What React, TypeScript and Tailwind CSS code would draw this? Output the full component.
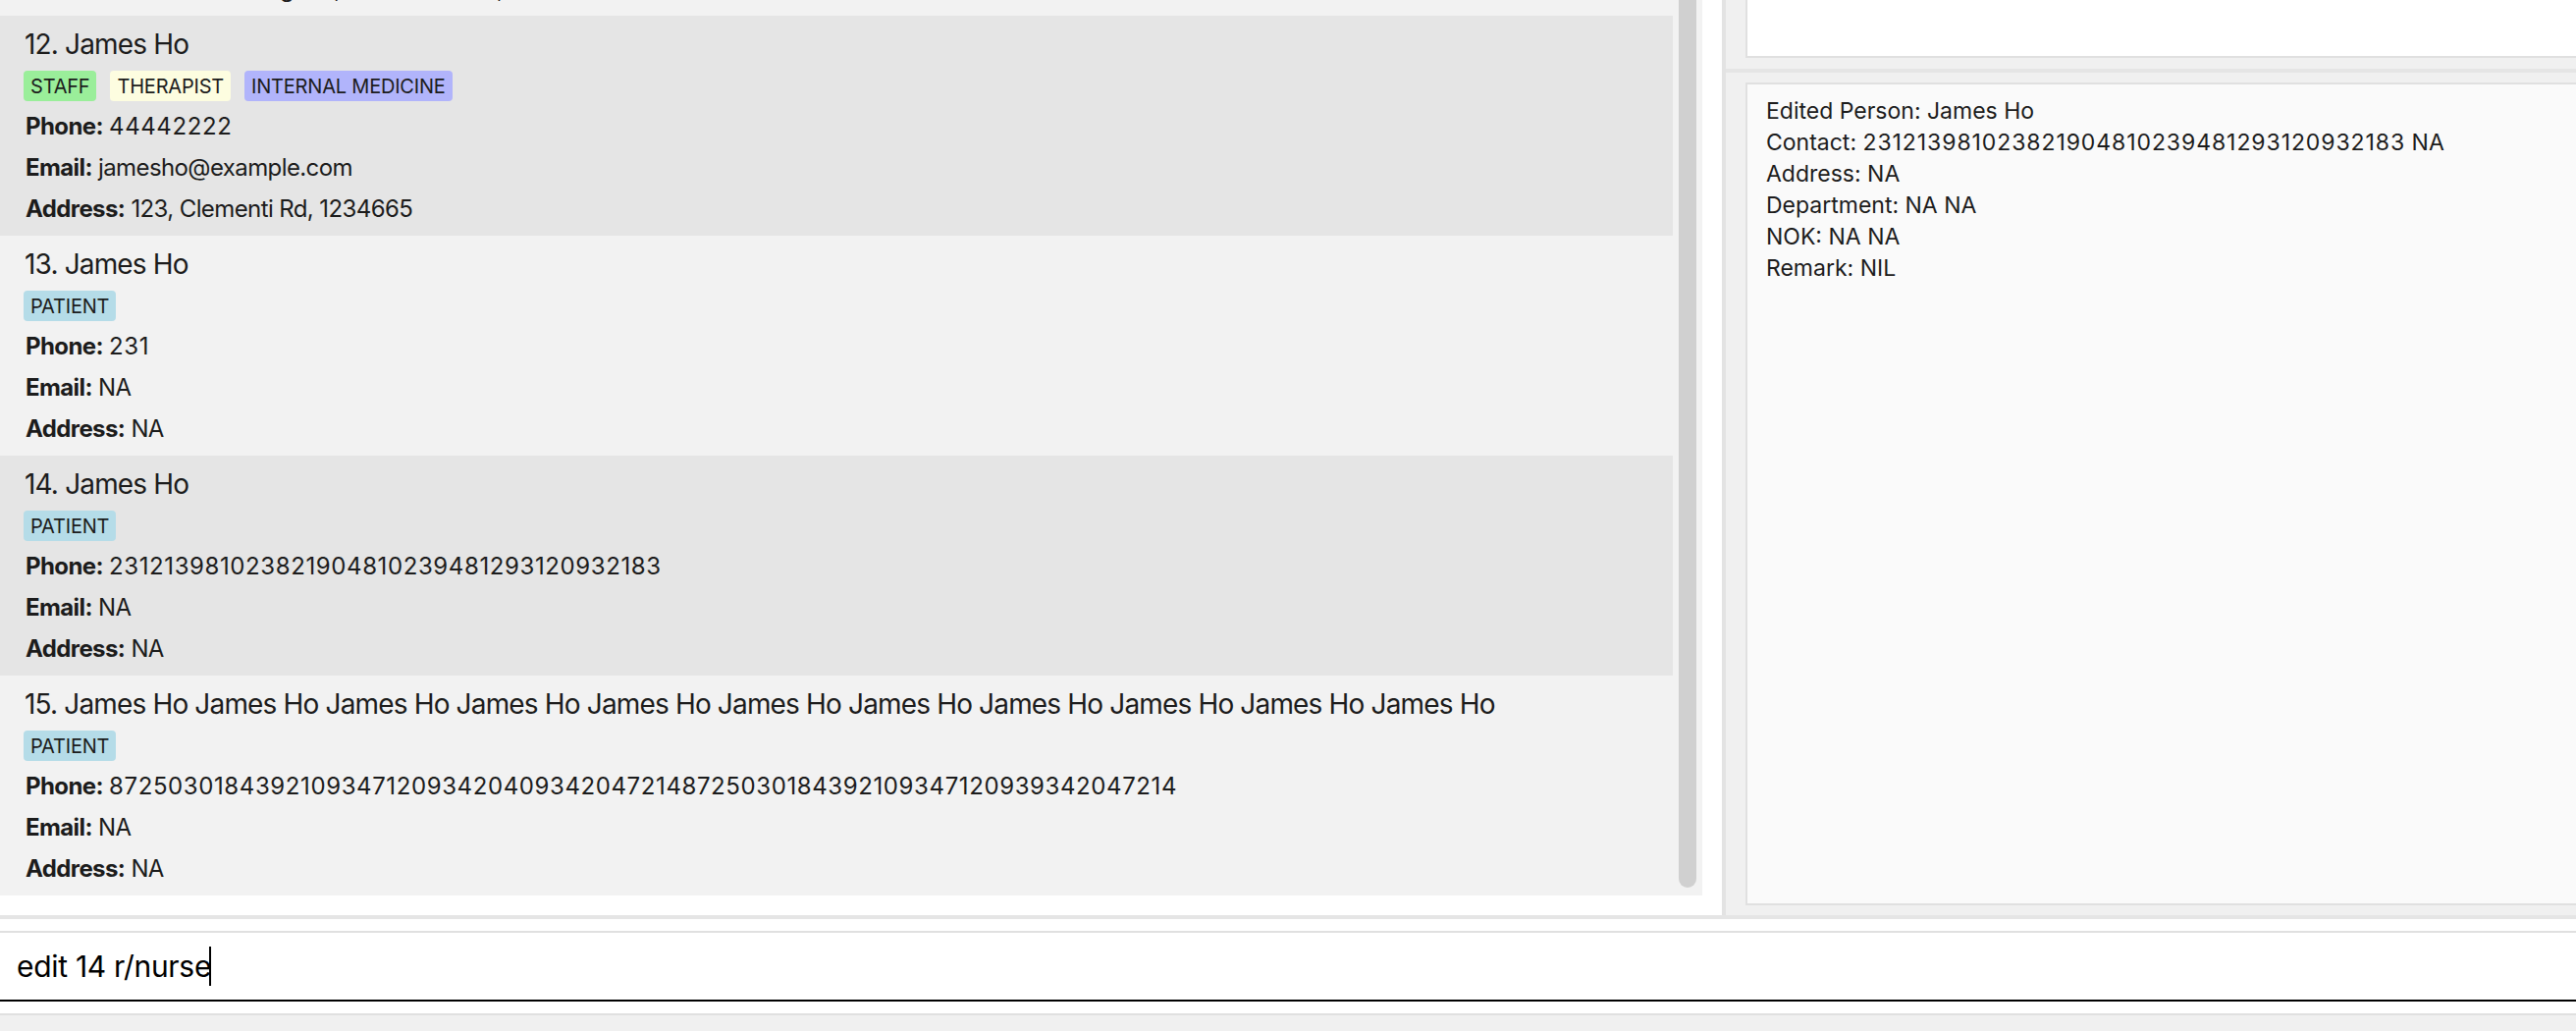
import React from "react";

type Tag = { label: string; cls: string };

type Person = {
  index: number;
  name: string;
  tags: Tag[];
  phone: string;
  email: string;
  address: string;
};

const STAFF: Tag = { label: "STAFF", cls: "bg-[#9aee9a]" };
const THERAPIST: Tag = { label: "THERAPIST", cls: "bg-[#fdfde0]" };
const INTERNAL: Tag = { label: "INTERNAL MEDICINE", cls: "bg-[#b1b4fb]" };
const PATIENT: Tag = { label: "PATIENT", cls: "bg-[#b5dce8]" };

const PEOPLE: Person[] = [
  {
    index: 11,
    name: "David Li",
    tags: [PATIENT],
    phone: "91031282",
    email: "lidavid@example.com",
    address: "Blk 436 Serangoon, Gardens St 26, #16-43",
  },
  {
    index: 12,
    name: "James Ho",
    tags: [STAFF, THERAPIST, INTERNAL],
    phone: "44442222",
    email: "jamesho@example.com",
    address: "123, Clementi Rd, 1234665",
  },
  {
    index: 13,
    name: "James Ho",
    tags: [PATIENT],
    phone: "231",
    email: "NA",
    address: "NA",
  },
  {
    index: 14,
    name: "James Ho",
    tags: [PATIENT],
    phone: "231213981023821904810239481293120932183",
    email: "NA",
    address: "NA",
  },
  {
    index: 15,
    name: Array(11).fill("James Ho").join(" "),
    tags: [PATIENT],
    phone: "8725030184392109347120934204093420472148725030184392109347120939342047214",
    email: "NA",
    address: "NA",
  },
];

function PersonCard({ person }: { person: Person }) {
  const even = person.index % 2 === 0;
  return (
    <div
      className={`h-[224px] pl-[24px] pt-[12px] ${
        even ? "bg-[#e5e5e5]" : "bg-[#f2f2f2]"
      }`}
    >
      <div className="pl-[1px] text-[28px] leading-[34px] tracking-[-0.03em]">
        {person.index}. {person.name}
      </div>
      <div className="mt-[10px] flex gap-[14px]">
        {person.tags.map((tag) => (
          <span
            key={tag.label}
            className={`flex h-[31px] items-center rounded-[4px] px-[7px] text-[20px] tracking-[-0.01em] ${tag.cls}`}
          >
            {tag.label}
          </span>
        ))}
      </div>
      <div className="mt-[5px] pl-[2px] text-[24px] leading-[42px] tracking-[-0.025em]">
        <div>
          <span className="font-bold">Phone:</span>{" "}
          <span className="tracking-[0.025em]">{person.phone}</span>
        </div>
        <div>
          <span className="font-bold">Email:</span> {person.email}
        </div>
        <div>
          <span className="font-bold">Address:</span> {person.address}
        </div>
      </div>
    </div>
  );
}

export default function App() {
  return (
    <div className="flex h-[1050px] w-[2624px] flex-col overflow-hidden bg-[#f0f0f0] font-['Inter',sans-serif] text-[#1c1c1c]">
      {/* 上半部分：列表 + 结果 */}
      <div className="flex h-[932px]">
        <div className="w-[1754px] bg-white">
          <div className="flex h-[912px] w-[1734px] overflow-hidden bg-[#f2f2f2]">
            <div className="w-[1704px] overflow-hidden">
              <div className="mt-[-208px]">
                {PEOPLE.map((p) => (
                  <PersonCard key={p.index} person={p} />
                ))}
              </div>
            </div>
            <div className="w-[30px] px-[6px]">
              <div className="h-[904px] rounded-b-[10px] bg-[#d0d0d0]" />
            </div>
          </div>
        </div>
        <div className="w-[4px] bg-[#e3e3e3]" />
        <div className="flex flex-1 flex-col bg-[#f0f0f0]">
          <div className="ml-[20px] h-[59px] border-b-2 border-l-2 border-[#e0e0e0] bg-white" />
          <div className="mt-[11px] h-[4px] bg-[#e5e5e5]" />
          <div className="ml-[20px] mt-[10px] h-[838px] border-y-2 border-l-2 border-[#e0e0e0] bg-[#fafafa] pl-[19px] pt-[11px] text-[23px] leading-[32px]">
            <div>Edited Person: James Ho</div>
            <div>
              Contact:{" "}
              <span className="tracking-[0.04em]">
                231213981023821904810239481293120932183
              </span>{" "}
              NA
            </div>
            <div>Address: NA</div>
            <div>Department: NA NA</div>
            <div>NOK: NA NA</div>
            <div>Remark: NIL</div>
          </div>
        </div>
      </div>

      {/* 命令输入框 */}
      <div className="h-[4px] bg-[#e5e5e5]" />
      <div className="h-[12px] bg-white" />
      <div className="h-[2px] bg-[#e0e0e0]" />
      <div className="flex h-[68px] items-center bg-white pl-[17px] text-[30px] tracking-[-0.01em] text-black">
        <span>edit 14 r/nurse</span>
        <span className="ml-[-2px] inline-block h-[40px] w-[2px] bg-black" />
      </div>
      <div className="h-[2px] bg-black" />
      <div className="h-[12px] bg-white" />
      <div className="h-[2px] bg-[#e0e0e0]" />
      <div className="flex-1 bg-[#f0f0f0]" />
    </div>
  );
}
